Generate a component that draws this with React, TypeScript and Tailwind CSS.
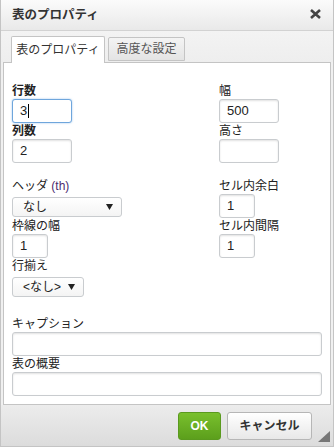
import React from "react";

const font = "font-['Liberation_Sans','Noto_Sans_CJK_JP',sans-serif]";

const Label: React.FC<{ children: React.ReactNode; bold?: boolean }> = ({ children, bold }) => (
  <div className={`h-[16px] text-[12px] leading-[16px] text-[#222] whitespace-nowrap ${bold ? "font-bold" : ""}`}>
    {children}
  </div>
);

const Input: React.FC<{ w: string; value?: string; focus?: boolean }> = ({ w, value, focus }) => (
  <div
    className={`h-[24px] ${w} rounded-[3px] border bg-white px-[7px] text-[13px] leading-[22px] text-[#222] flex items-center ${
      focus
        ? "border-[#6fa6dc] shadow-[0_0_2px_rgba(80,150,220,0.6)]"
        : "border-[#c9cccf] shadow-[inset_0_1px_2px_rgba(0,0,0,0.12)]"
    }`}
  >
    <span>{value}</span>
    {focus && <span className="ml-[1px] h-[14px] w-px bg-black" />}
  </div>
);

const Select: React.FC<{ w: string; value: string }> = ({ w, value }) => (
  <div
    className={`mt-[3px] mb-[1px] h-[20px] ${w} rounded-[3px] border border-[#c9cccf] bg-gradient-to-b from-white to-[#f4f4f4] flex items-center justify-between pl-[10px] pr-[8px] text-[12px] text-[#222]`}
  >
    <span>{value}</span>
    <svg width="7" height="6" viewBox="0 0 7 6">
      <path d="M0 0H7L3.5 6Z" fill="#222" />
    </svg>
  </div>
);

export default function App() {
  return (
    <div className={`${font} w-[334px] h-[447px] flex flex-col bg-[#f0f0f0] border-x border-[#c4c4c4] overflow-hidden`}>
      {/* title bar */}
      <div className="h-[31px] shrink-0 flex items-center justify-between pl-[11px] pr-[12px] bg-gradient-to-b from-[#fbfbfb] to-[#e9e9e9] border-b border-[#d2d2d2]">
        <span className="text-[12.5px] font-bold text-[#333]">表のプロパティ</span>
        <svg width="11" height="10" viewBox="0 0 11 10" className="mb-[3px]">
          <path d="M1 1L10 9M10 1L1 9" stroke="#444" strokeWidth="2.6" />
        </svg>
      </div>

      {/* tabs */}
      <div className="h-[31px] shrink-0 flex items-end gap-[3px] pl-[10px] bg-gradient-to-b from-[#f3f3f3] to-[#eeeeee]">
        <div className="relative z-10 -mb-px h-[27px] w-[94px] flex items-center justify-center rounded-t-[2px] border border-b-0 border-[#c4c4c4] bg-white text-[12px] text-[#333]">
          表のプロパティ
        </div>
        <div className="mb-[1px] h-[24px] w-[77px] flex items-center justify-center rounded-t-[2px] border border-[#c4c4c4] bg-gradient-to-b from-[#f4f4f4] to-[#e4e4e4] text-[12px] text-[#555]">
          高度な設定
        </div>
      </div>

      {/* panel */}
      <div className="mx-[2px] h-[343px] shrink-0 border border-[#c4c4c4] bg-white pl-[8px] pr-[8px] pt-[20px]">
        <div className="grid grid-cols-[207px_1fr]">
          <div className="flex flex-col">
            <Label bold>行数</Label>
            <Input w="w-[60px]" value="3" focus />
            <Label bold>列数</Label>
            <Input w="w-[60px]" value="2" />
            <div className="h-[15px]" />
            <Label>
              ヘッダ <span className="text-[#4b2a6e]">(th)</span>
            </Label>
            <Select w="w-[110px]" value="なし" />
            <Label>枠線の幅</Label>
            <Input w="w-[36px]" value="1" />
            <Label>行揃え</Label>
            <Select w="w-[72px]" value="<なし>" />
          </div>
          <div className="flex flex-col">
            <Label>幅</Label>
            <Input w="w-[60px]" value="500" />
            <Label>高さ</Label>
            <Input w="w-[60px]" />
            <div className="h-[15px]" />
            <Label>セル内余白</Label>
            <Input w="w-[36px]" value="1" />
            <Label>セル内間隔</Label>
            <Input w="w-[36px]" value="1" />
          </div>
        </div>
        <div className="h-[18px]" />
        <Label>キャプション</Label>
        <Input w="w-[310px]" />
        <Label>表の概要</Label>
        <Input w="w-[310px]" />
      </div>

      {/* footer */}
      <div className="relative flex-1 flex items-start justify-end gap-[6px] pt-[7px] pr-[21px] bg-gradient-to-b from-[#ececec] to-[#dcdcdc] border-b border-[#c4c4c4]">
        <div className="h-[28px] w-[43px] flex items-center justify-center rounded-[3px] border border-[#5a9a1e] bg-gradient-to-b from-[#79c02d] to-[#5c9f1c] text-[12px] font-bold text-white">
          OK
        </div>
        <div className="h-[28px] w-[85px] flex items-center justify-center rounded-[3px] border border-[#b6b6b6] bg-gradient-to-b from-white to-[#e8e8e8] text-[12px] font-bold text-[#333]">
          キャンセル
        </div>
        <svg width="12" height="11" viewBox="0 0 12 11" className="absolute right-[3px] bottom-[4px]">
          <path d="M12 0V11H0Z" fill="#777" />
        </svg>
      </div>
    </div>
  );
}
